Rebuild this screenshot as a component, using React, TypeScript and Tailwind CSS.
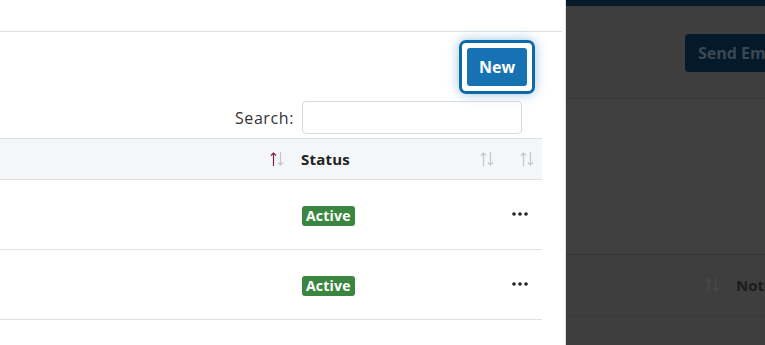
const SortArrows = ({ active = false, dim = false }: { active?: boolean; dim?: boolean }) => {
  const base = dim ? "#4a4a4a" : "#c3c7cc";
  const up = active ? "#7c2346" : base;
  return (
    <svg width="14" height="16" viewBox="0 0 14 16" fill="none">
      <path d="M3.5 15V2M1 4.5L3.5 2L6 4.5" stroke={up} strokeWidth="1.2" />
      <path d="M10.5 1V14M8 11.5L10.5 14L13 11.5" stroke={base} strokeWidth="1.2" />
    </svg>
  );
};

const Dots = () => (
  <svg width="16" height="4" viewBox="0 0 16 4">
    <circle cx="2" cy="2" r="1.8" fill="#222" />
    <circle cx="8" cy="2" r="1.8" fill="#222" />
    <circle cx="14" cy="2" r="1.8" fill="#222" />
  </svg>
);

const Row = () => (
  <div className="grid grid-cols-[292px_208px_42px] h-[70px] border-b border-[#dde2e6] items-center">
    <div />
    <div className="pl-[10px]">
      <span className="inline-block bg-[#3a853f] text-white text-[14px] tracking-[0.2px] font-bold leading-[20px] px-[4px] rounded-[3px]">Active</span>
    </div>
    <div className="flex justify-end pr-[14px] pb-[1px]">
      <Dots />
    </div>
  </div>
);

export default function App() {
  return (
    <div className="w-[765px] h-[345px] overflow-hidden flex font-['Open_Sans',sans-serif] text-[#222]">
      {/* Left page */}
      <div className="w-[566px] shrink-0 bg-white border-r border-[#e2e2e2]">
        <div className="h-[32px] border-b border-[#dde2e6] mr-[3px]" />
        <div className="w-[542px]">
          <div className="flex justify-end pt-[8px] pr-[7px]">
            <div className="rounded-[7px] border-[3px] border-[#0f69a6] p-[5px] shadow-[0_0_12px_rgba(30,120,190,0.45)]">
              <button className="w-[60px] h-[38px] bg-[#1672b2] text-white text-[16px] font-bold rounded-[3px]">New</button>
            </div>
          </div>
          <div className="flex justify-end items-center gap-[8px] mt-[7px] pr-[20px]">
            <span className="text-[16px] tracking-[0.6px] text-[#333]">Search:</span>
            <div className="w-[220px] h-[33px] border border-[#d5dadf] rounded-[4px]" />
          </div>
          <div className="mt-[4px] grid grid-cols-[292px_208px_42px] h-[42px] bg-[#f5f6f8] border-y border-[#dde2e6] items-center">
            <div className="flex justify-end pr-[8px]"><SortArrows active /></div>
            <div className="flex items-center justify-between pl-[9px] pr-[6px]">
              <span className="text-[15px] tracking-[0.2px] font-bold">Status</span>
              <SortArrows />
            </div>
            <div className="flex justify-end pr-[8px]"><SortArrows /></div>
          </div>
          <Row />
          <Row />
        </div>
      </div>

      {/* Right page under overlay */}
      <div className="flex-1 bg-[#3e3e3e] flex flex-col">
        <div className="h-[6px] bg-[#071a28]" />
        <div className="h-[93px] border-b border-[#383838] pt-[28px] pl-[119px]">
          <div className="h-[38px] bg-[#04192a] rounded-l-[4px] flex items-center pl-[13px] whitespace-nowrap overflow-hidden">
            <span className="text-[16px] font-bold text-[#3b4853]">Send Email</span>
          </div>
        </div>
        <div className="h-[156px] border-b border-[#353535] bg-[#404040] flex items-end justify-end pb-[14px] whitespace-nowrap overflow-hidden">
          <span className="text-[15px] text-[#1f1f1f] mr-[-9px]">S</span>
        </div>
        <div className="h-[61px] border-b border-[#383838] flex items-center pl-[139px] gap-[17px] whitespace-nowrap overflow-hidden">
          <SortArrows dim />
          <span className="text-[15px] font-bold text-[#1c1c1c]">Note</span>
        </div>
        <div className="flex-1" />
      </div>
    </div>
  );
}
